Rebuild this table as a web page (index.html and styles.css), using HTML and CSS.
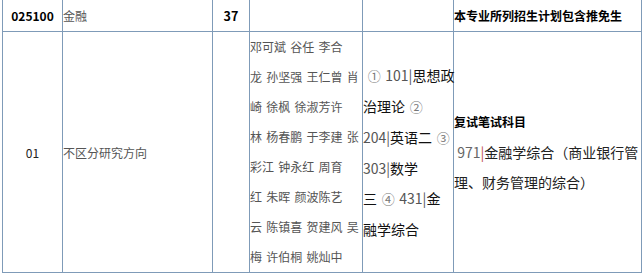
FILE: index.html
```html
<!DOCTYPE html>
<html lang="zh-CN">
<head>
<meta charset="utf-8">
<title>招生目录</title>
<link rel="stylesheet" href="styles.css">
</head>
<body>
<table class="catalog">
  <tr class="row-major">
    <td class="c1 code">025100</td>
    <td class="c2 name">金融</td>
    <td class="c3 count">37</td>
    <td class="c4"></td>
    <td class="c5"></td>
    <td class="c6 note">本专业所列招生计划包含推免生</td>
  </tr>
  <tr class="row-dir">
    <td class="dir-code">01</td>
    <td class="dir-name">不区分研究方向</td>
    <td></td>
    <td class="tutors">
      <span class="line">邓可斌 谷任 李合</span>
      <span class="line">龙 孙坚强 王仁曾 肖</span>
      <span class="line">崎 徐枫 徐淑芳许</span>
      <span class="line">林 杨春鹏 于李建 张</span>
      <span class="line">彩江 钟永红 周育</span>
      <span class="line">红 朱晖 颜波陈艺</span>
      <span class="line">云 陈镇喜 贺建风 吴</span>
      <span class="line">梅 许伯桐 姚灿中</span>
    </td>
    <td class="subjects">
      <span class="line"> <span class="num"><span class="circ">①</span> 101|</span>思想政</span>
      <span class="line">治理论 <span class="num"><span class="circ">②</span></span></span>
      <span class="line"><span class="num">204|</span>英语二 <span class="num"><span class="circ">③</span></span></span>
      <span class="line"><span class="num">303|</span>数学</span>
      <span class="line">三 <span class="num"><span class="circ">④</span> 431|</span>金</span>
      <span class="line">融学综合</span>
    </td>
    <td class="retest">
      <span class="line head">复试笔试科目</span>
      <span class="line big"> <span class="num">971</span><span class="bar">|</span>金融学综合（商业银行管</span>
      <span class="line big">理、财务管理的综合）</span>
    </td>
  </tr>
</table>
</body>
</html>
```

FILE: styles.css
```css
html, body {
  margin: 0;
  padding: 0;
  background: #ffffff;
}

body {
  font-family: "Noto Sans CJK SC", "Noto Sans", sans-serif;
  font-size: 12px;
  color: #333;
}

.catalog {
  margin-left: 2px;
  width: 640px;
  table-layout: fixed;
  border-collapse: separate;
  border-spacing: 0;
}

.catalog td {
  box-sizing: border-box;
  padding: 0;
  border-right: 1px solid #7f9bb8;
  border-bottom: 1px solid #7f9bb8;
  vertical-align: middle;
  white-space: nowrap;
  overflow: visible;
}

.catalog td:first-child {
  border-left: 1px solid #7f9bb8;
}

.c1 { width: 61px; }
.c2 { width: 150px; }
.c3 { width: 37px; }
.c4 { width: 113px; }
.c5 { width: 91px; }
.c6 { width: 188px; }

.row-major td {
  height: 32px;
  line-height: 20px;
}

.row-dir td {
  height: 241px;
}

.code {
  text-align: center;
  font-weight: bold;
  color: #000;
}

.name {
  color: #555;
}

.count {
  text-align: center;
  font-weight: bold;
  color: #000;
  font-size: 12.5px;
}

.note {
  font-weight: bold;
  color: #000;
}

.dir-code {
  text-align: center;
  color: #222;
}

.dir-name {
  color: #555;
}

.line {
  display: block;
  line-height: 30px;
  white-space: pre;
}

.tutors {
  color: #555;
  word-spacing: 1.6px;
}

.subjects {
  font-size: 14px;
  color: #111;
  word-spacing: 1.5px;
}

.subjects .num {
  color: #555;
}

.subjects .circ {
  font-size: 13px;
  color: #777;
}

.retest .head {
  font-weight: bold;
  color: #000;
}

.retest .big {
  font-size: 14px;
  color: #222;
}

.retest .num {
  color: #666;
}

.retest .bar {
  color: #c0504d;
}
```
